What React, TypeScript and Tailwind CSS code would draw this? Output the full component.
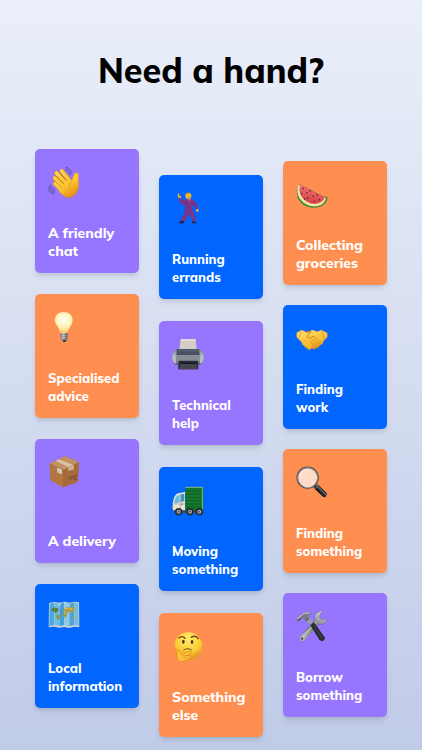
import type { ReactNode } from "react";
import clsx from "clsx";

function Icon({ children }: { children: ReactNode }) {
  return (
    <svg viewBox="0 0 96 96" className="h-8 w-8" fill="none" aria-hidden="true">
      {children}
    </svg>
  );
}

function WaveIcon() {
  return (
    <Icon>
      <defs>
        <linearGradient id="wave" x1="20" y1="15" x2="70" y2="95" gradientUnits="userSpaceOnUse">
          <stop stopColor="#ffd64d" />
          <stop offset="0.6" stopColor="#fcc32f" />
          <stop offset="1" stopColor="#e58a15" />
        </linearGradient>
      </defs>
      <g stroke="#c47a12" strokeWidth="13" strokeLinecap="round">
        <path d="M41 15 65 43M25 21 56 54M20 36 49 64M21 53 45 73" />
      </g>
      <path
        d="M60 36 70 46C74 41 74 32 78 25C81 18 91 19 92 27C91 36 91 43 92 53C93 72 85 88 67 94C54 97 43 87 31 75Z"
        fill="url(#wave)"
        stroke="#d28618"
        strokeWidth="1"
      />
      <g stroke="url(#wave)" strokeWidth="11" strokeLinecap="round">
        <path d="M41 15 66 46M25 21 59 58M20 36 53 70M21 53 49 80" />
      </g>
      <path d="M35 20 57 44M24 30 49 54M22 46 42 65" stroke="#c17b13" strokeWidth="2" />
      <path d="M72 47C65 52 62 59 63 66" stroke="#da9622" strokeWidth="2" />
      <path
        d="M54 4C61 6 67 12 71 19M53 10C60 13 65 19 67 26M3 63C6 70 12 75 19 78M2 71C5 77 10 81 17 83M6 57C9 64 14 69 21 72"
        stroke="#454176"
        strokeWidth="2.5"
        strokeLinecap="round"
      />
    </Icon>
  );
}

function DancerIcon() {
  return (
    <Icon>
      <path d="M27 84 24 90 17 94H35L37 86ZM60 85 61 94H76L69 90 68 84Z" fill="#252244" />
      <path
        d="M38 23C43 19 56 19 60 23L71 29C76 35 79 44 78 53L72 54 69 42 62 37 61 51 67 66C70 73 71 80 70 88L60 88C59 80 56 72 50 66C47 74 43 80 37 88L26 86C31 75 36 68 39 58L38 38 27 37 17 20 23 16 32 26Z"
        fill="#783585"
      />
      <path d="M31 82C39 73 42 65 46 56M64 79C61 68 56 59 50 53" stroke="#8c4496" strokeWidth="2" />
      <path d="M62 37 69 43M39 37 43 30" stroke="#4f2164" strokeWidth="2" />
      <path d="M47 21 52 32 57 21Z" fill="#c9669a" />
      <path d="M52 24 52 34" stroke="#6b294e" strokeWidth="2" />
      <circle cx="49" cy="12" r="9" fill="#f8c130" />
      <path d="M40 11C40 1 51-1 57 5C53 6 48 7 45 6C43 7 42 9 42 13Z" fill="#d99728" />
      <path d="M18 4V15L25 19 27 13 22 11 20 4Z" fill="#ffc92d" stroke="#d88c18" />
      <circle cx="76" cy="55" r="4" fill="#f5b936" />
      <path d="M46 12h1M53 12h1M47 17q3 2 6 0" stroke="#69421f" strokeWidth="2" />
    </Icon>
  );
}

function WatermelonIcon() {
  return (
    <Icon>
      <defs>
        <linearGradient id="melon" x1="40" y1="20" x2="32" y2="82" gradientUnits="userSpaceOnUse">
          <stop stopColor="#f57370" />
          <stop offset="1" stopColor="#d83743" />
        </linearGradient>
      </defs>
      <path d="M11 19C0 27 0 49 9 65C22 90 62 96 84 79C91 74 95 65 94 57L82 54Z" fill="#388331" />
      <path d="M8 20C1 33 3 51 14 65C31 86 61 91 79 78C85 74 89 67 90 60L82 55Z" fill="#eee9a6" />
      <path d="M13 19C7 34 10 50 20 61C35 79 61 84 77 71C82 67 85 62 86 57Z" fill="url(#melon)" />
      <path d="M4 57C20 88 60 97 85 78" stroke="#4c8f38" strokeWidth="2" />
      <path d="M12 20C8 33 10 50 20 61C34 77 60 83 77 71" stroke="#ffd1a1" strokeWidth="2" opacity="0.6" />
      <g stroke="#412e35" strokeWidth="4" strokeLinecap="round">
        <path d="m22 31-1 1M18 46l-1 1M32 44l1 1M43 38l-1 1M36 59l-1 1M52 54l-1 1M63 50l1 1M56 70l-1 1M70 65l-1 1M26 62l-1 1" />
      </g>
    </Icon>
  );
}

function BulbIcon() {
  return (
    <Icon>
      <defs>
        <radialGradient id="bulb" cx="47" cy="27" r="36" gradientUnits="userSpaceOnUse">
          <stop stopColor="#fffef0" />
          <stop offset="0.55" stopColor="#fff6c4" />
          <stop offset="0.85" stopColor="#ffe08a" />
          <stop offset="1" stopColor="#ffc866" />
        </radialGradient>
        <linearGradient id="bulbCap" x1="36" y1="70" x2="61" y2="70" gradientUnits="userSpaceOnUse">
          <stop stopColor="#7d7a7a" />
          <stop offset="0.38" stopColor="#dfdbd6" />
          <stop offset="0.65" stopColor="#9b9999" />
          <stop offset="1" stopColor="#5c5756" />
        </linearGradient>
      </defs>
      <path
        d="M35 66C35 49 21 44 21 28C21 11 32 3 47 3C63 3 74 12 74 28C74 45 60 50 60 66Z"
        fill="url(#bulb)"
      />
      <path d="M41 62 41 42 47 45 53 42 54 62" stroke="#ffe39a" strokeWidth="1.5" />
      <path d="M36 65H60L58 85 54 91H43L38 85Z" fill="url(#bulbCap)" />
      <path d="m37 72 22-2M38 78l21-2M39 85l18-3" stroke="#6b6564" strokeWidth="2" />
      <path d="M42 86H56L53 93H46Z" fill="#383b40" />
    </Icon>
  );
}

function PrinterIcon() {
  return (
    <Icon>
      <defs>
        <linearGradient id="printer" x1="0" y1="35" x2="0" y2="82" gradientUnits="userSpaceOnUse">
          <stop stopColor="#737881" />
          <stop offset="0.3" stopColor="#a8b0b6" />
          <stop offset="0.65" stopColor="#8c969f" />
          <stop offset="1" stopColor="#4f565f" />
        </linearGradient>
      </defs>
      <path d="M26 4H71L74 37H22Z" fill="#d5cec6" />
      <path d="M26 4H71V8H25Z" fill="#e6e0d8" />
      <path d="M12 34H83C92 38 95 45 94 67C94 76 88 80 80 81H14C5 80 2 73 2 63C1 47 5 38 12 34Z" fill="url(#printer)" />
      <path d="M15 33H79L84 51H13Z" fill="#4a5161" />
      <path d="M18 35H77L79 40H17Z" fill="#5b6272" />
      <path d="M13 51H84V66H12Z" fill="#868d96" />
      <path d="M2 51C10 49 13 59 11 78L6 74C1 68 1 60 2 51ZM94 51C86 49 83 59 85 78L90 74C95 68 95 60 94 51Z" fill="#bbc2c5" />
      <path d="M20 68H78L79 94H18Z" fill="#2c2e38" />
      <path d="M25 77H73L75 90H23Z" fill="#44464e" />
      <path d="M25 73H73V78H24Z" fill="#181c24" />
      <path d="M18 91H79V94H18Z" fill="#56525c" />
      <path d="M80 57h3" stroke="#61d25c" strokeWidth="3" />
    </Icon>
  );
}

function HandshakeIcon() {
  return (
    <Icon>
      <defs>
        <linearGradient id="shake" x1="35" y1="25" x2="55" y2="85" gradientUnits="userSpaceOnUse">
          <stop stopColor="#ffda61" />
          <stop offset="0.6" stopColor="#fabd36" />
          <stop offset="1" stopColor="#dc8b1b" />
        </linearGradient>
      </defs>
      <path
        d="M2 32 17 24 30 30 40 28 49 24 64 29 76 24 94 33V45L83 57 80 65 72 70 68 76 61 77 56 82 48 79 41 84 35 81 31 77 27 76 25 71 20 69 17 61 2 46Z"
        fill="url(#shake)"
        stroke="#cf851b"
        strokeWidth="1"
      />
      <path d="m19 66 10-9M26 74l10-11M33 79l10-11" stroke="#bd7718" strokeWidth="2" />
      <g stroke="#f7bd38" strokeWidth="8" strokeLinecap="round">
        <path d="m22 62 6-5M30 70l6-6M38 76l5-5" />
      </g>
      <path d="M30 31 44 29M46 27 34 41C32 49 43 50 49 44L55 43 78 61" stroke="#c97e17" strokeWidth="3" strokeLinejoin="round" />
      <path d="m51 47 23 21M45 50l22 24M42 56l16 22M17 25l-7 21M77 26l8 25" stroke="#cf851b" strokeWidth="2" />
      <path d="m55 43 24 19M50 27l15 5 10-4M5 34l12-7 10 5" stroke="#ffe176" strokeWidth="1.5" />
    </Icon>
  );
}

function PackageIcon() {
  return (
    <Icon>
      <path d="M5 23 50 1 93 19 89 77 46 94 7 72Z" fill="#ad7044" />
      <path d="M5 23 50 1 93 19 47 43Z" fill="#c39061" />
      <path d="M5 23 47 43 46 94 7 72Z" fill="#b27643" />
      <path d="M47 43 93 19 89 77 46 94Z" fill="#a66a3c" />
      <path d="m23 15 10-5 44 18V40L61 44V33Z" fill="#d8c4a5" />
      <path d="m61 33 16-6V40L61 44Z" fill="#cbb395" />
      <path d="M5 23 47 43 93 19M47 43 46 94" stroke="#95603a" strokeWidth="1" />
      <path d="m28 35 13 6V55L28 49Z" fill="#dedbd5" />
      <path d="m30 42 7 3m-7 1 7 3" stroke="#a39c94" strokeWidth="1.5" />
      <path d="m64 64 11-4-1 6-10 3ZM80 59l6-2-1 13-6 2Z" stroke="#6d432b" strokeWidth="2" />
    </Icon>
  );
}

function TruckIcon() {
  return (
    <Icon>
      <path d="M5 79H93V86H7Z" fill="#3c474b" />
      <path d="M40 10H94V78H40Z" fill="#147529" />
      <path d="M40 10H94M91 12V78" stroke="#83b68d" strokeWidth="3" />
      <path d="M42 20H88M42 30H88M42 40H88M42 50H88M42 60H88M42 70H88" stroke="#085c22" strokeWidth="2" />
      <path d="M42 16H88M42 26H88M42 36H88M42 46H88M42 56H88M42 66H88" stroke="#318541" strokeWidth="1" />
      <path d="M2 58C5 40 11 29 20 28L39 24V79H3Z" fill="#ebe3d5" />
      <path d="M7 53C10 42 14 34 19 33L23 32V55L7 59Z" fill="#65bce1" />
      <path d="M26 31 37 30V51L26 55Z" fill="#3c91bd" />
      <path d="M25 30V78M4 60H39" stroke="#aaa8a2" strokeWidth="2" />
      <path d="m27 61 7-1" stroke="#60666a" strokeWidth="2" />
      <path d="M2 67h7v7H2Z" fill="#ffdf75" />
      {[20, 54, 82].map((x) => (
        <g key={x}>
          <circle cx={x} cy="83" r="11" fill="#262b31" />
          <circle cx={x} cy="83" r="6" fill="#b7b9b9" />
          <circle cx={x} cy="83" r="3" fill="#4b5156" />
        </g>
      ))}
    </Icon>
  );
}

function MagnifierIcon() {
  return (
    <Icon>
      <defs>
        <linearGradient id="handle" x1="67" y1="80" x2="80" y2="67" gradientUnits="userSpaceOnUse">
          <stop stopColor="#08090c" />
          <stop offset="0.5" stopColor="#33363c" />
          <stop offset="0.67" stopColor="#84878b" />
          <stop offset="0.78" stopColor="#23252a" />
          <stop offset="1" stopColor="#08090c" />
        </linearGradient>
      </defs>
      <path d="m53 55 9 8" stroke="#6c737b" strokeWidth="7" />
      <path d="m63 64 22 21" stroke="url(#handle)" strokeWidth="16" strokeLinecap="round" />
      <circle cx="35" cy="35" r="31" fill="#ffdbc8" stroke="#42474c" strokeWidth="5" />
      <circle cx="35" cy="35" r="30" stroke="#c2c8cc" strokeWidth="2" />
      <path d="M10 36C12 19 25 10 42 13" stroke="#fff3e7" strokeWidth="2" />
      <path d="m57 68 9-8" stroke="#9ea3a8" strokeWidth="2" />
    </Icon>
  );
}

function MapIcon() {
  return (
    <Icon>
      <path d="M3 6 19 3 34 5 49 2 64 5 79 2 93 4 94 79 79 77 64 81 49 78 33 80 18 77 2 79Z" fill="#cdd6cf" />
      <path d="M5 8 19 5V72L4 75Z" fill="#4aa9dc" />
      <path d="m19 5 15 3V75L19 72Z" fill="#6dbce4" />
      <path d="m34 8 15-4V73L34 75Z" fill="#3f9fdb" />
      <path d="m49 4 15 4V76L49 73Z" fill="#8bcbe6" />
      <path d="m64 8 15-4V72L64 76Z" fill="#4ba3d6" />
      <path d="m79 4 12 3 1 67-13-2Z" fill="#74bbdc" />
      <path d="m10 25 8-6 9 2 6 5-4 5-5 5-3-1-5-5-6-1Z" fill="#56793f" />
      <path d="m27 40 8 2 2 5-4 6-3 5-3-6-2-6Z" fill="#8d8b35" />
      <path d="m46 27 6-7 9-1 12-1 9 4-3 6-5 3-5 7-5-5-7 1-5-3-5 1Z" fill="#b09b3c" />
      <path d="m45 34 8-1 6 4-4 8-4 8-3-8-5-6Z" fill="#8a9a3b" />
      <path d="m76 48 7-1 3 5-8 2Z" fill="#c9a847" />
      <path d="m52 22 9 1M66 23l8 2M49 37l6 2M29 44l4 2" stroke="#e2ca67" strokeWidth="3" />
      <path d="m31 10 8-3-2 7-4 2Z" fill="#cfc9c8" />
      <path d="M19 5V74M34 8V77M49 4V75M64 8V78M79 4V74" stroke="#d0e1dd" strokeWidth="1" opacity="0.6" />
    </Icon>
  );
}

function ThinkingIcon() {
  return (
    <Icon>
      <defs>
        <radialGradient id="face" cx="49" cy="27" r="55" gradientUnits="userSpaceOnUse">
          <stop stopColor="#ffed62" />
          <stop offset="0.7" stopColor="#fccc37" />
          <stop offset="1" stopColor="#e99c25" />
        </radialGradient>
      </defs>
      <circle cx="49" cy="49" r="42" fill="url(#face)" />
      <path d="M21 24C26 18 35 19 39 25M58 22C66 17 74 19 79 26" stroke="#72421c" strokeWidth="4" strokeLinecap="round" />
      <ellipse cx="34" cy="35" rx="4" ry="6" fill="#493622" />
      <ellipse cx="60" cy="36" rx="4" ry="6" fill="#493622" />
      <path d="M35 60C42 55 51 55 58 59" stroke="#6d441d" strokeWidth="3" strokeLinecap="round" />
      <path
        d="M16 62C21 58 25 62 25 68L29 72 53 63C58 62 60 67 56 70L45 77 53 76C59 76 59 82 53 85L43 90C35 96 22 96 17 88C13 81 14 70 16 62Z"
        fill="#ffbf38"
        stroke="#d98722"
        strokeWidth="2"
      />
      <path d="m30 78 15-2M34 84l11-3" stroke="#d98722" strokeWidth="2" />
    </Icon>
  );
}

function ToolsIcon() {
  return (
    <Icon>
      <defs>
        <linearGradient id="steel" x1="60" y1="5" x2="20" y2="90" gradientUnits="userSpaceOnUse">
          <stop stopColor="#c1c3c5" />
          <stop offset="0.45" stopColor="#747a80" />
          <stop offset="1" stopColor="#b7b9bb" />
        </linearGradient>
      </defs>
      <path d="M29 28 38 21 56 43 48 51Z" fill="#9da1a5" />
      <path
        d="M67 6C56 11 53 21 57 31L12 79C6 87 15 98 24 92L68 43C80 46 92 37 92 24L84 30 75 28 70 20 74 10 82 3C77 2 72 3 67 6Z"
        fill="url(#steel)"
        stroke="#555b62"
        strokeWidth="1"
      />
      <path d="M60 37 20 81" stroke="#dddddd" strokeWidth="3" />
      <circle cx="18" cy="86" r="4" fill="#605878" />
      <path d="M43 46 54 37 88 85 80 94 71 91Z" fill="#2a2b33" />
      <path d="m53 46 26 40" stroke="#55585f" strokeWidth="2" />
      <path d="M2 24 12 18C16 8 29 2 51 9C43 10 39 14 37 20L40 27 30 34 22 25 13 28 8 38 2 32Z" fill="#777c82" />
      <path d="M3 26 14 19C20 10 29 8 41 9" stroke="#d7d8d8" strokeWidth="3" />
      <path d="m7 31 8-6M30 32l7-7" stroke="#363a42" strokeWidth="3" />
    </Icon>
  );
}

const columns = [
  {
    className: "gap-[21px] pt-[58px]",
    cards: [
      { label: "A friendly chat", icon: <WaveIcon />, color: "bg-[#9676ff]", size: "text-sm" },
      { label: "Specialised advice", icon: <BulbIcon />, color: "bg-[#ff8f50]", size: "text-[13px]" },
      { label: "A delivery", icon: <PackageIcon />, color: "bg-[#9676ff]", size: "text-sm" },
      { label: "Local information", icon: <MapIcon />, color: "bg-[#0066ff]", size: "text-[13px]" },
    ],
  },
  {
    className: "gap-[22px] pt-[84px]",
    cards: [
      { label: "Running errands", icon: <DancerIcon />, color: "bg-[#0066ff]", size: "text-[13px]" },
      { label: "Technical help", icon: <PrinterIcon />, color: "bg-[#9676ff]", size: "text-[13px]" },
      { label: "Moving something", icon: <TruckIcon />, color: "bg-[#0066ff]", size: "text-[13px]" },
      { label: "Something else", icon: <ThinkingIcon />, color: "bg-[#ff8f50]", size: "text-sm" },
    ],
  },
  {
    className: "gap-5 pt-[70px]",
    cards: [
      { label: "Collecting groceries", icon: <WatermelonIcon />, color: "bg-[#ff8f50]", size: "text-sm" },
      { label: "Finding work", icon: <HandshakeIcon />, color: "bg-[#0066ff]", size: "text-[13px]" },
      { label: "Finding something", icon: <MagnifierIcon />, color: "bg-[#ff8f50]", size: "text-[13px]" },
      { label: "Borrow something", icon: <ToolsIcon />, color: "bg-[#9676ff]", size: "text-[13px]" },
    ],
  },
];

export default function App() {
  return (
    <main className="min-h-screen bg-linear-to-b from-[#eaeff9] to-[#c0cbe8] px-[35px] pt-[51px] pb-3 font-['Mulish','Open_Sans',sans-serif]">
      <h1 className="text-center text-[34px] leading-10 font-extrabold text-black">Need a hand?</h1>
      <div className="grid grid-cols-3 gap-5">
        {columns.map((column, i) => (
          <div key={i} className={clsx("flex flex-col", column.className)}>
            {column.cards.map((card) => (
              <button
                key={card.label}
                type="button"
                className={clsx(
                  "flex min-h-[124px] flex-col items-start justify-between rounded-[5px] px-[13px] pt-[17px] pb-[13px] text-left font-extrabold text-white shadow-md",
                  card.color
                )}
              >
                {card.icon}
                <span className={clsx("leading-[18px]", card.size)}>{card.label}</span>
              </button>
            ))}
          </div>
        ))}
      </div>
    </main>
  );
}
